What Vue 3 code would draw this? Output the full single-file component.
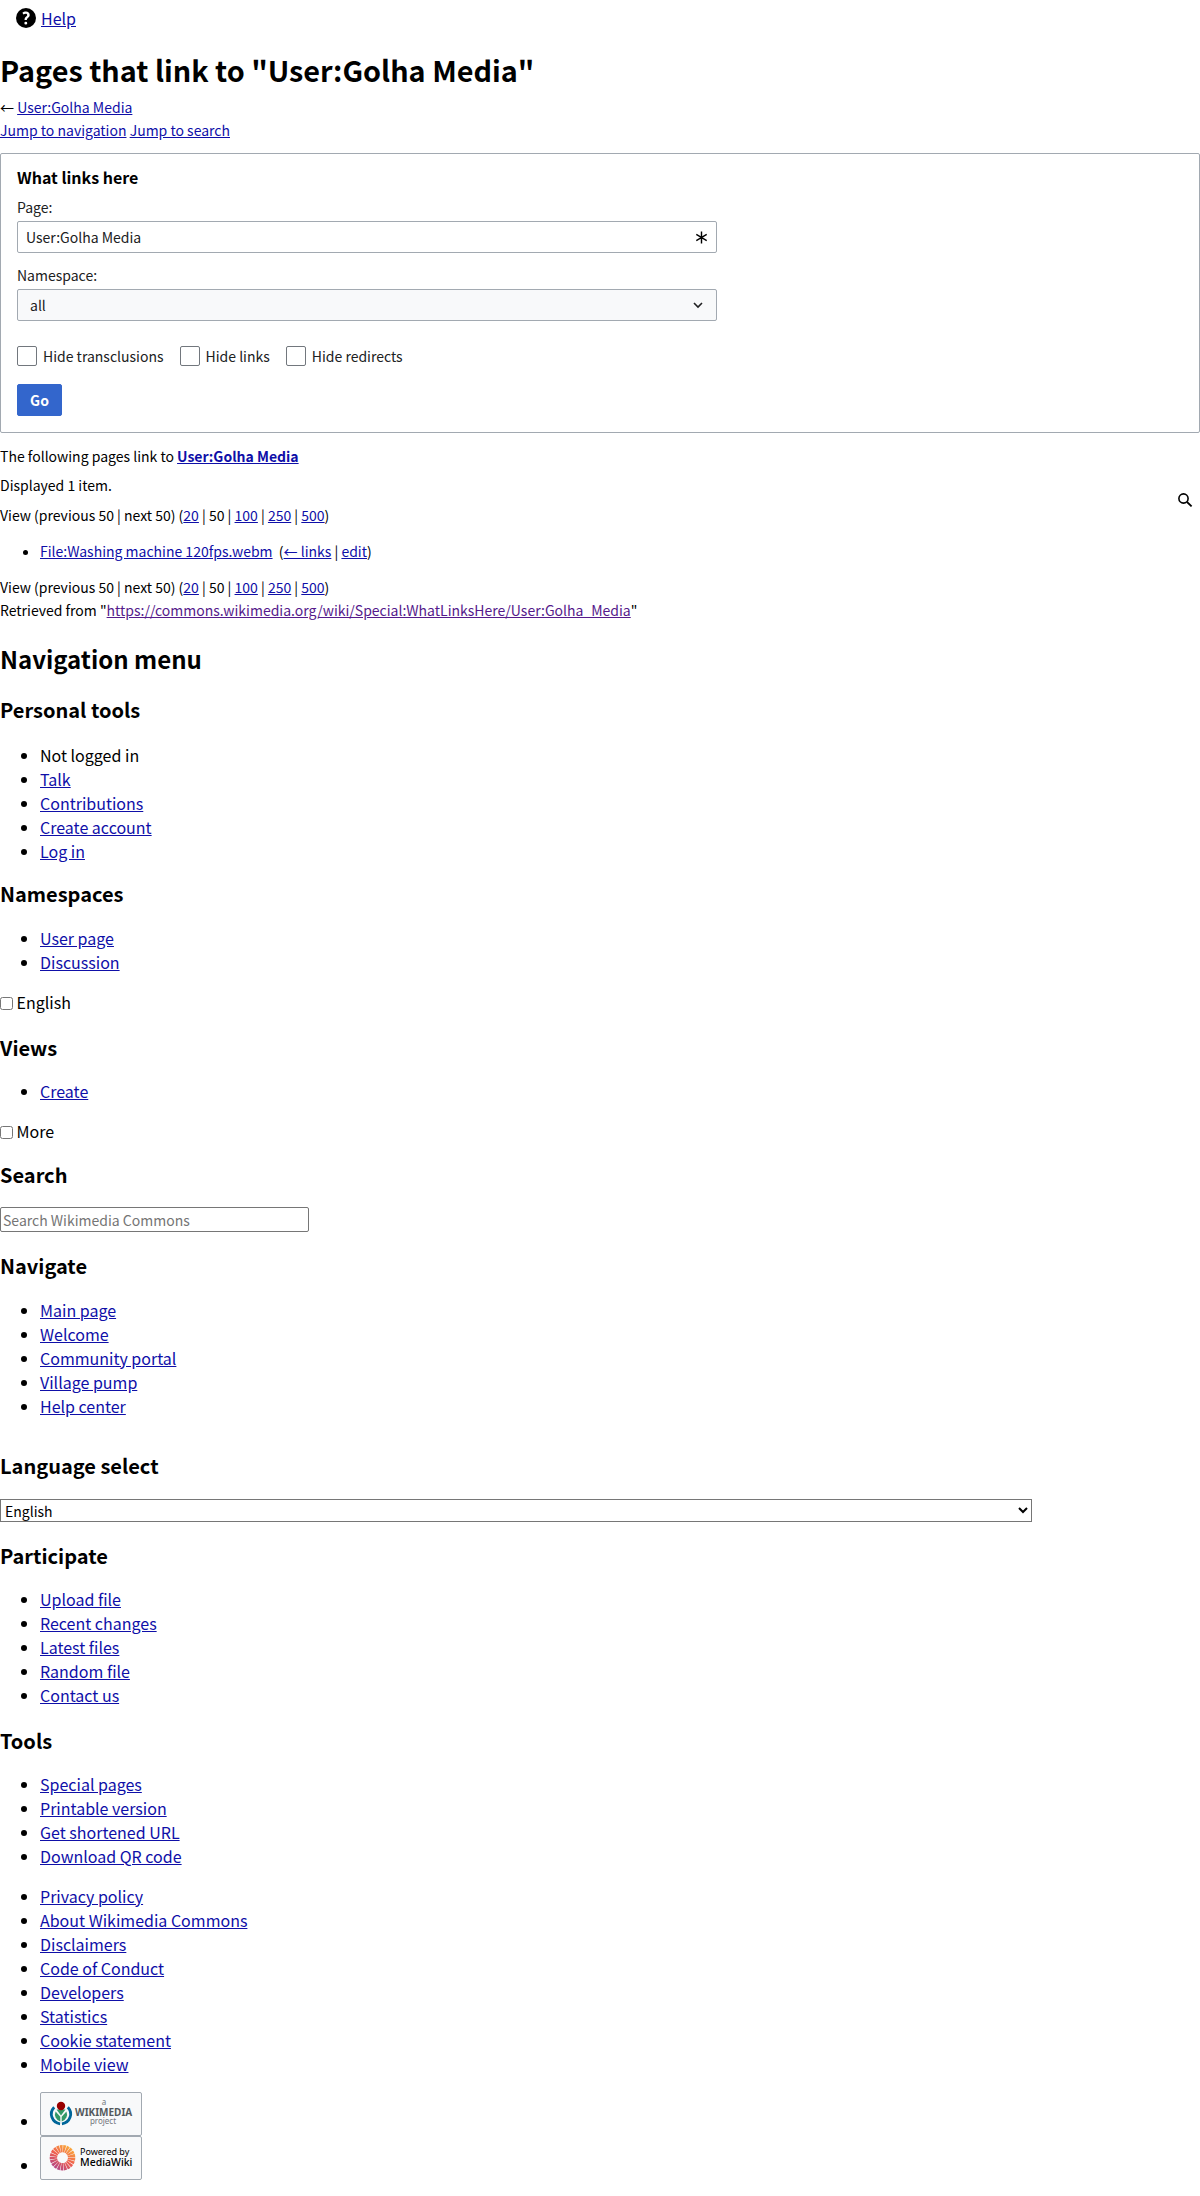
<template>
  <div class="page">
    <div class="help">
      <svg class="help-icon" viewBox="0 0 20 20" width="20" height="20">
        <circle cx="10" cy="10" r="10" fill="#000" />
        <path d="M10.06 3.6c-1.5 0-2.75.45-3.66 1.2l1.1 1.75c.6-.5 1.4-.8 2.2-.8.9 0 1.5.45 1.5 1.2 0 .7-.5 1.15-1.2 1.7-1 .8-1.45 1.5-1.45 2.7v.55h2.35v-.4c0-.65.3-1.05 1.05-1.6 1-.75 1.75-1.55 1.75-2.95 0-2.1-1.65-3.35-3.64-3.35zM9.8 13.7a1.45 1.45 0 1 0 0 2.9 1.45 1.45 0 0 0 0-2.9z" fill="#fff" />
      </svg>
      <a href="#">Help</a>
    </div>

    <h1>Pages that link to "User:Golha Media"</h1>
    <div class="small sub">← <a href="#">User:Golha Media</a></div>
    <div class="small jump"><a href="#">Jump to navigation</a> <a href="#">Jump to search</a></div>

    <fieldset class="box">
      <div class="legend">What links here</div>
      <label class="field-label">Page:</label>
      <div class="text-input">
        <span>User:Golha Media</span>
        <svg viewBox="0 0 12 12" width="13" height="13">
          <path d="M6 0.5v11M1.2 3.2l9.6 5.6M10.8 3.2L1.2 8.8" stroke="#000" stroke-width="1.3" fill="none" />
        </svg>
      </div>
      <label class="field-label ns">Namespace:</label>
      <div class="fake-select">
        <span>all</span>
        <svg viewBox="0 0 12 12" width="12" height="12">
          <path d="M2 4l4 4 4-4" stroke="#202122" stroke-width="1.6" fill="none" />
        </svg>
      </div>
      <div class="checks">
        <label v-for="c in hideChecks" :key="c" class="check"><span class="check-box"></span>{{ c }}</label>
      </div>
      <button class="go">Go</button>
    </fieldset>

    <p class="small line first">The following pages link to <a href="#"><b>User:Golha Media</b></a></p>
    <p class="small line displayed">Displayed 1 item.</p>
    <p class="small line">View (previous 50 | next 50) (<a href="#">20</a> | 50 | <a href="#">100</a> | <a href="#">250</a> | <a href="#">500</a>)</p>
    <ul class="small result">
      <li><a href="#">File:Washing machine 120fps.webm</a> &nbsp;(<a href="#">← links</a> | <a href="#">edit</a>)</li>
    </ul>
    <p class="small line view2">View (previous 50 | next 50) (<a href="#">20</a> | 50 | <a href="#">100</a> | <a href="#">250</a> | <a href="#">500</a>)</p>
    <div class="small retrieved">Retrieved from "<a class="visited" href="#">https://commons.wikimedia.org/wiki/Special:WhatLinksHere/User:Golha_Media</a>"</div>

    <svg class="search-icon" viewBox="0 0 16 16" width="16" height="16">
      <circle cx="6.5" cy="6.5" r="4.6" stroke="#000" stroke-width="1.6" fill="none" />
      <path d="M10 10l4.6 4.4" stroke="#000" stroke-width="1.8" fill="none" />
    </svg>

    <h2>Navigation menu</h2>

    <section class="personal">
      <h3>Personal tools</h3>
      <ul>
        <li>Not logged in</li>
        <li v-for="l in personal" :key="l"><a href="#">{{ l }}</a></li>
      </ul>
    </section>

    <section>
      <h3>Namespaces</h3>
      <ul>
        <li v-for="l in namespaces" :key="l"><a href="#">{{ l }}</a></li>
      </ul>
    </section>

    <div class="toggle"><input type="checkbox" /> English</div>

    <section class="views">
      <h3>Views</h3>
      <ul>
        <li><a href="#">Create</a></li>
      </ul>
    </section>

    <div class="toggle"><input type="checkbox" /> More</div>

    <section class="search-block">
      <h3>Search</h3>
      <input class="search" type="text" placeholder="Search Wikimedia Commons" />
    </section>

    <section class="navigate">
      <h3>Navigate</h3>
      <ul>
        <li v-for="l in navigate" :key="l"><a href="#">{{ l }}</a></li>
      </ul>
    </section>

    <section class="language">
      <h3>Language select</h3>
      <select class="lang">
        <option>English</option>
      </select>
    </section>

    <section class="participate">
      <h3>Participate</h3>
      <ul>
        <li v-for="l in participate" :key="l"><a href="#">{{ l }}</a></li>
      </ul>
    </section>

    <section class="tools">
      <h3>Tools</h3>
      <ul>
        <li v-for="l in tools" :key="l"><a href="#">{{ l }}</a></li>
      </ul>
    </section>

    <section>
      <ul>
        <li v-for="l in footer" :key="l"><a href="#">{{ l }}</a></li>
      </ul>
    </section>

    <ul class="badges">
      <li>
        <a class="badge" href="#">
          <svg viewBox="0 0 102 44" width="102" height="44">
            <path d="M14.2 15.2a9.8 9.8 0 0 0 5.9 16.6M27.8 15.2a9.8 9.8 0 0 1-5.9 16.6" stroke="#069" stroke-width="2.8" fill="none" />
            <path d="M15.6 19.5l4.7 5.2v4.9a7.4 7.4 0 0 1-4.7-10.1z" fill="#396" />
            <path d="M26.4 19.5l-4.7 5.2v4.9a7.4 7.4 0 0 0 4.7-10.1z" fill="#396" />
            <path d="M16.5 17.5h9l-4.5 6z" fill="#396" />
            <circle cx="21" cy="14" r="4.2" fill="#900" />
            <text x="64" y="13" class="b-thin" text-anchor="middle">a</text>
            <text x="35" y="23.5" class="b-wiki">WIKIMEDIA</text>
            <text x="63" y="31.5" class="b-thin" text-anchor="middle">project</text>
          </svg>
        </a>
      </li>
      <li>
        <a class="badge" href="#">
          <svg viewBox="0 0 102 44" width="102" height="44">
            <defs>
              <linearGradient id="mw" gradientUnits="userSpaceOnUse" x1="30" y1="10" x2="14" y2="34">
                <stop offset="0" stop-color="#fbb03b" />
                <stop offset="0.5" stop-color="#ef5d4f" />
                <stop offset="1" stop-color="#a9448f" />
              </linearGradient>
            </defs>
            <circle cx="22.5" cy="21.7" r="9.1" fill="none" stroke="url(#mw)" stroke-width="7.4" stroke-dasharray="2.2 0.5" />
            <text x="40" y="19.2" class="b-pow">Powered by</text>
            <text x="40" y="30" class="b-mw">MediaWiki</text>
          </svg>
        </a>
      </li>
    </ul>
  </div>
</template>

<script setup>
const hideChecks = ["Hide transclusions", "Hide links", "Hide redirects"];
const personal = ["Talk", "Contributions", "Create account", "Log in"];
const namespaces = ["User page", "Discussion"];
const navigate = ["Main page", "Welcome", "Community portal", "Village pump", "Help center"];
const participate = ["Upload file", "Recent changes", "Latest files", "Random file", "Contact us"];
const tools = ["Special pages", "Printable version", "Get shortened URL", "Download QR code"];
const footer = [
  "Privacy policy",
  "About Wikimedia Commons",
  "Disclaimers",
  "Code of Conduct",
  "Developers",
  "Statistics",
  "Cookie statement",
  "Mobile view",
];
</script>

<style>
body {
  background: #fff;
}
</style>

<style scoped>
.page {
  position: relative;
  height: 2196px;
  overflow: hidden;
  font-family: "Noto Sans CJK SC", "Noto Sans", sans-serif;
  font-size: 16px;
  line-height: 24px;
  color: #000;
}

a {
  color: #0f0fa8;
  text-decoration: underline;
}

a.visited {
  color: #551a8b;
}

.help {
  display: flex;
  align-items: center;
  gap: 5px;
  padding: 6px 0 0 16px;
}

h1 {
  margin: 16px 0 0;
  font-size: 28.8px;
  line-height: 48px;
  font-weight: 700;
}

h2 {
  margin: 19px 0 0;
  font-size: 24px;
  line-height: 36px;
  font-weight: 700;
}

h3 {
  margin: 0 0 17px;
  font-size: 20px;
  line-height: 30px;
  font-weight: 700;
}

.small {
  font-size: 14px;
  line-height: 23px;
}

.sub {
  margin-top: 2px;
}

.box {
  box-sizing: border-box;
  width: 1200px;
  height: 280px;
  margin: 11px 0 0;
  padding: 11px 16px 12px;
  border: 1px solid #a2a9b1;
  border-radius: 2px;
  font-size: 14px;
  line-height: 22px;
  color: #202122;
}

.legend {
  font-size: 16px;
  font-weight: 700;
  color: #000;
  line-height: 24px;
}

.field-label {
  display: block;
  margin-top: 7px;
}

.field-label.ns {
  margin-top: 11px;
}

.text-input,
.fake-select {
  box-sizing: border-box;
  width: 700px;
  height: 32px;
  margin-top: 3px;
  display: flex;
  align-items: center;
  justify-content: space-between;
  border: 1px solid #a2a9b1;
  border-radius: 2px;
  padding: 0 8px;
}

.fake-select {
  background: #f8f9fa;
  padding: 0 12px;
}

.checks {
  display: flex;
  gap: 16px;
  margin-top: 24px;
}

.check {
  display: flex;
  align-items: center;
  gap: 6px;
}

.check-box {
  box-sizing: border-box;
  width: 20px;
  height: 20px;
  border: 1px solid #72777d;
  border-radius: 2px;
}

.go {
  display: block;
  width: 45px;
  height: 32px;
  margin-top: 17px;
  background: #36c;
  color: #fff;
  border: 1px solid #36c;
  border-radius: 2px;
  font-family: inherit;
  font-size: 14px;
  font-weight: 700;
  padding: 0;
}

.line {
  margin: 7px 0 0;
}

.line.first {
  margin-top: 12px;
}

.line.displayed {
  margin-top: 6px;
}

.result {
  margin: 13px 0 0;
}

.line.view2 {
  margin-top: 13px;
}

.search-icon {
  position: absolute;
  top: 492px;
  left: 1177px;
}

section {
  margin-top: 16px;
}

ul {
  margin: 0;
  padding-left: 40px;
}

.toggle {
  margin-top: 16px;
  line-height: 24px;
}

.toggle input {
  margin: 0;
  vertical-align: -1px;
}

.personal {
  margin-top: 18px;
}

.personal h3 {
  margin-bottom: 18px;
}

.views {
  margin-top: 19px;
}

.views h3 {
  margin-bottom: 16px;
}

.search-block {
  margin-top: 17px;
}

.navigate {
  margin-top: 19px;
}

.language {
  margin-top: 33px;
}

.language h3 {
  margin-bottom: 18px;
}

.participate {
  margin-top: 19px;
}

.participate h3 {
  margin-bottom: 16px;
}

.tools {
  margin-top: 19px;
}

.tools h3 {
  margin-bottom: 16px;
}

.search {
  display: block;
  box-sizing: border-box;
  width: 309px;
  height: 25px;
  margin: 0;
  padding: 1px 2px;
  border: 1px solid #767676;
  border-radius: 2px;
  font-family: inherit;
  font-size: 14px;
}

.lang {
  display: block;
  width: 1032px;
  height: 23px;
  margin: 0;
  font-family: inherit;
  font-size: 14px;
  background: #fff;
}

.badges {
  margin-top: 16px;
}

.badge {
  box-sizing: border-box;
  display: inline-block;
  vertical-align: -8px;
  width: 102px;
  height: 44px;
  border: 1px solid #a2a9b1;
  border-radius: 2px;
  background: #f8f9fa;
  overflow: hidden;
}

.badge svg {
  display: block;
  margin: -1px;
}

.badges li {
  height: 44px;
}

.b-thin {
  font-family: "Noto Sans", sans-serif;
  font-size: 8px;
  fill: #72777d;
}

.b-wiki {
  font-family: "Noto Sans", sans-serif;
  font-size: 10px;
  font-weight: 700;
  fill: #54595d;
}

.b-pow {
  font-family: "Noto Sans", sans-serif;
  font-size: 9px;
  fill: #000;
}

.b-mw {
  font-family: "Noto Sans", sans-serif;
  font-size: 10.5px;
  font-weight: 500;
  fill: #000;
}
</style>
